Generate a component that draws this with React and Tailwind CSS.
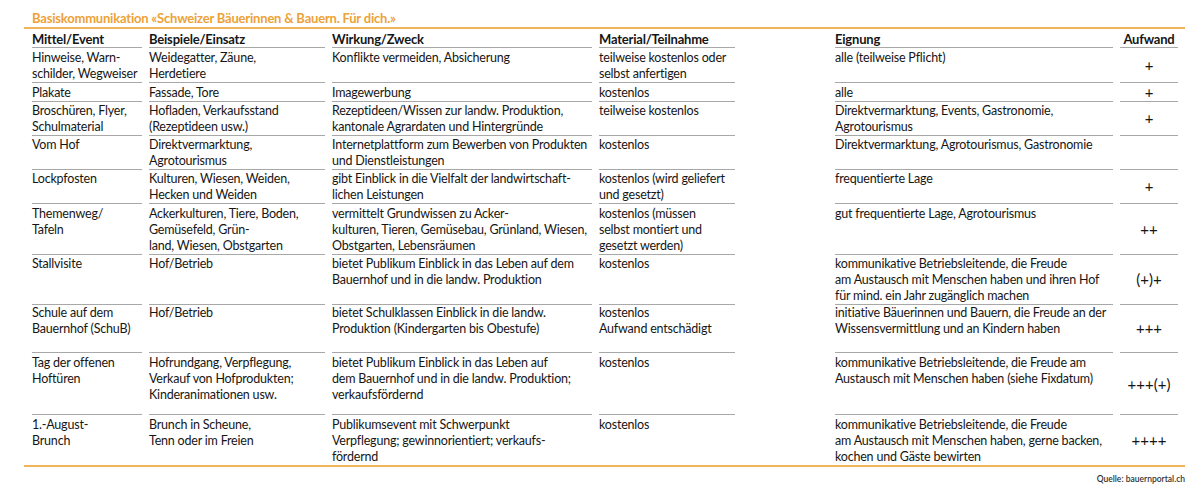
const rows = [
  {
    h: "h-[35px]",
    c: [["Hinweise, Warn-", "schilder, Wegweiser"], ["Weidegatter, Zäune,", "Herdetiere"], ["Konflikte vermeiden, Absicherung"], ["teilweise kostenlos oder", "selbst anfertigen"], ["alle (teilweise Pflicht)"]],
    a: "+",
  },
  { h: "h-[18px]", c: [["Plakate"], ["Fassade, Tore"], ["Imagewerbung"], ["kostenlos"], ["alle"]], a: "+" },
  {
    h: "h-[34px]",
    c: [["Broschüren, Flyer,", "Schulmaterial"], ["Hofladen, Verkaufsstand", "(Rezeptideen usw.)"], ["Rezeptideen/Wissen zur landw. Produktion,", "kantonale Agrardaten und Hintergründe"], ["teilweise kostenlos"], ["Direktvermarktung, Events, Gastronomie,", "Agrotourismus"]],
    a: "+",
  },
  {
    h: "h-[34px]",
    c: [["Vom Hof"], ["Direktvermarktung,", "Agrotourismus"], ["Internetplattform zum Bewerben von Produkten", "und Dienstleistungen"], ["kostenlos"], ["Direktvermarktung, Agrotourismus, Gastronomie"]],
    a: "",
  },
  {
    h: "h-[35px]",
    c: [["Lockpfosten"], ["Kulturen, Wiesen, Weiden,", "Hecken und Weiden"], ["gibt Einblick in die Vielfalt der landwirtschaft-", "lichen Leistungen"], ["kostenlos (wird geliefert", "und gesetzt)"], ["frequentierte Lage"]],
    a: "+",
  },
  {
    h: "h-[50px]",
    c: [["Themenweg/", "Tafeln"], ["Ackerkulturen, Tiere, Boden,", "Gemüsefeld, Grün-", "land, Wiesen, Obstgarten"], ["vermittelt Grundwissen zu Acker-", "kulturen, Tieren, Gemüsebau, Grünland, Wiesen,", "Obstgarten, Lebensräumen"], ["kostenlos (müssen", "selbst montiert und", "gesetzt werden)"], ["gut frequentierte Lage, Agrotourismus"]],
    a: "++",
  },
  {
    h: "h-[49px]",
    c: [["Stallvisite"], ["Hof/Betrieb"], ["bietet Publikum Einblick in das Leben auf dem", "Bauernhof und in die landw. Produktion"], ["kostenlos"], ["kommunikative Betriebsleitende, die Freude", "am Austausch mit Menschen haben und ihren Hof", "für mind. ein Jahr zugänglich machen"]],
    a: "(+)+",
  },
  {
    h: "h-[50px]",
    c: [["Schule auf dem", "Bauernhof (SchuB)"], ["Hof/Betrieb"], ["bietet Schulklassen Einblick in die landw.", "Produktion (Kindergarten bis Obestufe)"], ["kostenlos", "Aufwand entschädigt"], ["initiative Bäuerinnen und Bauern, die Freude an der", "Wissensvermittlung und an Kindern haben"]],
    a: "+++",
  },
  {
    h: "h-[62px]",
    c: [["Tag der offenen", "Hoftüren"], ["Hofrundgang, Verpflegung,", "Verkauf von Hofprodukten;", "Kinderanimationen usw."], ["bietet Publikum Einblick in das Leben auf", "dem Bauernhof und in die landw. Produktion;", "verkaufsfördernd"], ["kostenlos"], ["kommunikative Betriebsleitende, die Freude am", "Austausch mit Menschen haben (siehe Fixdatum)"]],
    a: "+++(+)",
  },
  {
    h: "h-[50px]",
    last: true,
    c: [["1.-August-", "Brunch"], ["Brunch in Scheune,", "Tenn oder im Freien"], ["Publikumsevent mit Schwerpunkt", "Verpflegung; gewinnorientiert; verkaufs-", "fördernd"], ["kostenlos"], ["kommunikative Betriebsleitende, die Freude", "am Austausch mit Menschen haben, gerne backen,", "kochen und Gäste bewirten"]],
    a: "++++",
  },
]

const Lines = ({ lines }) => (
  <>
    {lines.map((l, i) => (
      <div key={i} className="whitespace-nowrap">{l}</div>
    ))}
  </>
)

const App = () => {
  const line = (last) => (last ? "" : "border-b border-[#a8a8a8]")
  return (
    <div
      className="w-[1198px] h-[491px] bg-white px-[24px] text-[#161616] text-[12.5px] leading-[16px] tracking-[-0.2px]"
      style={{ fontFamily: "Lato, 'Liberation Sans', sans-serif" }}
    >
      {/* title */}
      <div className="h-[27px] flex items-end pl-[8px] pb-[1px] font-bold text-[#eda238] text-[13px]">
        Basiskommunikation «Schweizer Bäuerinnen &amp; Bauern. Für dich.»
      </div>

      <div className="w-[1161px] border-t-2 border-b-2 border-[#f2b458] pl-[8px] pr-[7px]">
        {/* header */}
        <div className="grid grid-cols-[110px_176px_260px_229px_278px_58px] gap-x-[7px] h-[19px] font-bold text-[13px] pt-[2px]">
          <div className="border-b border-[#a8a8a8]">Mittel/Event</div>
          <div className="border-b border-[#a8a8a8]">Beispiele/Einsatz</div>
          <div className="border-b border-[#a8a8a8]">Wirkung/Zweck</div>
          <div className="border-b border-[#a8a8a8] w-[136px]">Material/Teilnahme</div>
          <div className="border-b border-[#a8a8a8]">Eignung</div>
          <div className="border-b border-[#a8a8a8] text-center">Aufwand</div>
        </div>

        {rows.map((r, i) => (
          <div key={i} className={`grid grid-cols-[110px_176px_260px_229px_278px_58px] gap-x-[7px] ${r.h}`}>
            <div className={`pt-[2px] ${line(r.last)}`}><Lines lines={r.c[0]} /></div>
            <div className={`pt-[2px] ${line(r.last)}`}><Lines lines={r.c[1]} /></div>
            <div className={`pt-[2px] ${line(r.last)}`}><Lines lines={r.c[2]} /></div>
            <div className={`pt-[2px] w-[136px] ${line(r.last)}`}><Lines lines={r.c[3]} /></div>
            <div className={`pt-[2px] ${line(r.last)}`}><Lines lines={r.c[4]} /></div>
            <div className={`flex items-center justify-center text-[15px] tracking-normal ${line(r.last)}`}>{r.a}</div>
          </div>
        ))}
      </div>

      <div className="w-[1161px] text-right text-[8.5px] leading-[12px] pt-[6px] text-[#333] tracking-normal font-semibold">
        Quelle: bauernportal.ch
      </div>
    </div>
  )
}

export default App
